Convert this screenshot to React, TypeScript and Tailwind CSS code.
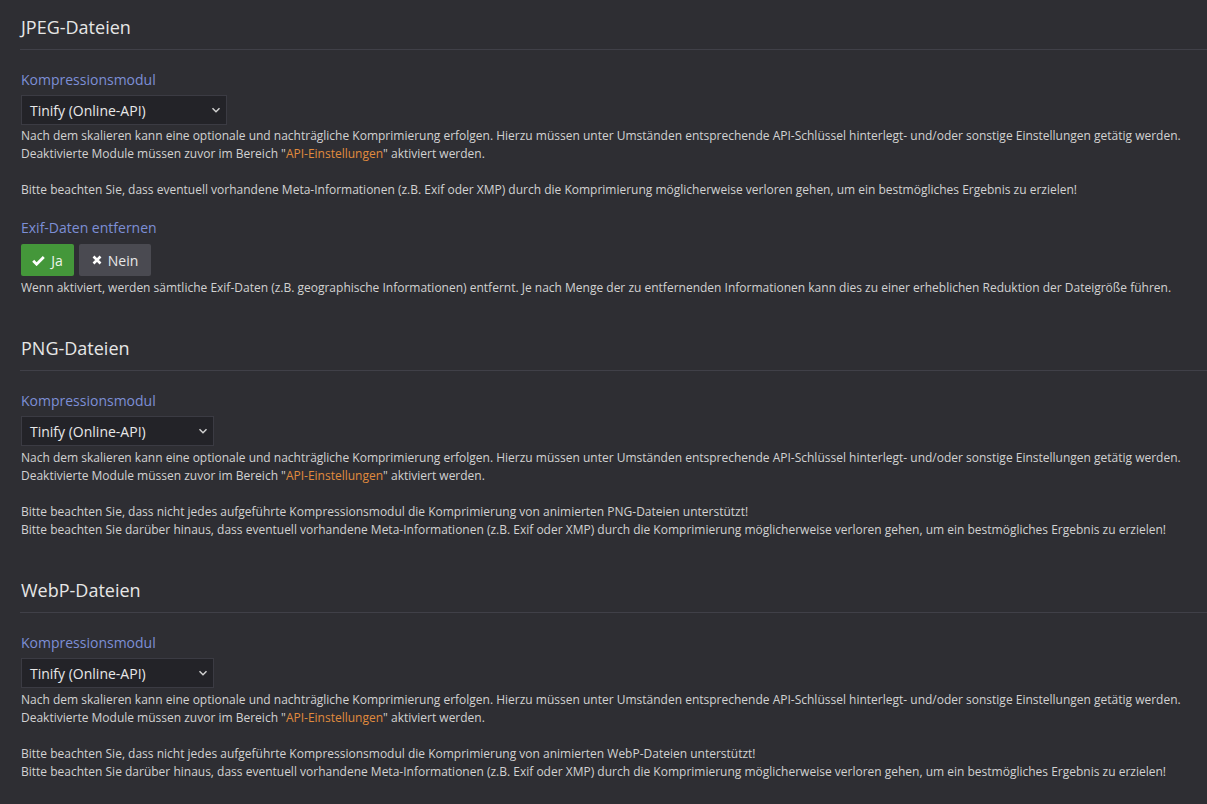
import { ReactNode } from 'react';

const font = { fontFamily: '"Open Sans", "Noto Sans", sans-serif' };

function Chevron() {
  return (
    <svg width="10" height="10" viewBox="0 0 10 10" className="text-[#d0d0d0]">
      <path d="M1.5 3.2 L5 6.7 L8.5 3.2" fill="none" stroke="currentColor" strokeWidth="1.5" />
    </svg>
  );
}

function Select({ width }: { width: string }) {
  return (
    <div className={`${width} mt-[5px] h-[30px] flex items-center justify-between pl-[8px] pr-[5px] bg-[#232328] border border-[#3b3b43] text-[14px] text-[#e8e8e8]`}>
      <span>Tinify (Online-API)</span>
      <Chevron />
    </div>
  );
}

function Label({ children }: { children: ReactNode }) {
  return <div className="text-[14px] leading-[20px] text-[#7d8fd6]">{children}</div>;
}

function Heading({ children, first }: { children: ReactNode; first?: boolean }) {
  return (
    <h3 className={`${first ? '' : 'mt-[38px]'} ml-[20px] pl-[1px] text-[18px] leading-[26px] pb-[9px] border-b border-[#404048] text-[#e6e6e6]`}>
      {children}
    </h3>
  );
}

function ApiHint() {
  return (
    <>
      <p>Nach dem skalieren kann eine optionale und nachträgliche Komprimierung erfolgen. Hierzu müssen unter Umständen entsprechende API-Schlüssel hinterlegt- und/oder sonstige Einstellungen getätig werden.</p>
      <p>
        Deaktivierte Module müssen zuvor im Bereich "<span className="text-[#e08b3e]">API-Einstellungen</span>" aktiviert werden.
      </p>
      <p>&nbsp;</p>
    </>
  );
}

export default function App() {
  return (
    <div style={font} className="min-h-screen bg-[#2e2e33] pt-[14px] pb-[30px]">
      <Heading first>JPEG-Dateien</Heading>
      <div className="pl-[21px] pr-[12px]">
        <div className="mt-[20px]">
          <Label>Kompressionsmodul</Label>
          <Select width="w-[206px]" />
          <div className="mt-[2px] text-[12px] leading-[18px] text-[#d2d2d2]">
            <ApiHint />
            <p>Bitte beachten Sie, dass eventuell vorhandene Meta-Informationen (z.B. Exif oder XMP) durch die Komprimierung möglicherweise verloren gehen, um ein bestmögliches Ergebnis zu erzielen!</p>
          </div>
        </div>
        <div className="mt-[19px]">
          <Label>Exif-Daten entfernen</Label>
          <div className="mt-[6px] flex gap-[5px]">
            <button className="h-[32px] w-[53px] flex items-center justify-center gap-[6px] rounded-[2px] bg-[#44973a] text-[14px] text-[#eef5ec]">
              <svg width="13" height="11" viewBox="0 0 13 11">
                <path d="M1.2 5.8 L4.6 9.2 L11.8 2" fill="none" stroke="#ffffff" strokeWidth="2.8" />
              </svg>
              Ja
            </button>
            <button className="h-[32px] w-[72px] flex items-center justify-center gap-[6px] rounded-[2px] bg-[#4a4a51] text-[14px] text-[#e8e8e8]">
              <svg width="10" height="10" viewBox="0 0 10 10">
                <path d="M1.5 1.5 L8.5 8.5 M8.5 1.5 L1.5 8.5" fill="none" stroke="#ffffff" strokeWidth="2.6" />
              </svg>
              Nein
            </button>
          </div>
          <p className="mt-[3px] text-[12px] leading-[18px] text-[#d2d2d2]">
            Wenn aktiviert, werden sämtliche Exif-Daten (z.B. geographische Informationen) entfernt. Je nach Menge der zu entfernenden Informationen kann dies zu einer erheblichen Reduktion der Dateigröße führen.
          </p>
        </div>
      </div>

      {[
        { title: 'PNG-Dateien', kind: 'PNG' },
        { title: 'WebP-Dateien', kind: 'WebP' },
      ].map((s) => (
        <div key={s.kind}>
          <Heading>{s.title}</Heading>
          <div className="pl-[21px] pr-[12px] mt-[20px]">
            <Label>Kompressionsmodul</Label>
            <Select width="w-[193px]" />
            <div className="mt-[3px] text-[12px] leading-[18px] text-[#d2d2d2]">
              <ApiHint />
              <p>Bitte beachten Sie, dass nicht jedes aufgeführte Kompressionsmodul die Komprimierung von animierten {s.kind}-Dateien unterstützt!</p>
              <p>Bitte beachten Sie darüber hinaus, dass eventuell vorhandene Meta-Informationen (z.B. Exif oder XMP) durch die Komprimierung möglicherweise verloren gehen, um ein bestmögliches Ergebnis zu erzielen!</p>
            </div>
          </div>
        </div>
      ))}
    </div>
  );
}
